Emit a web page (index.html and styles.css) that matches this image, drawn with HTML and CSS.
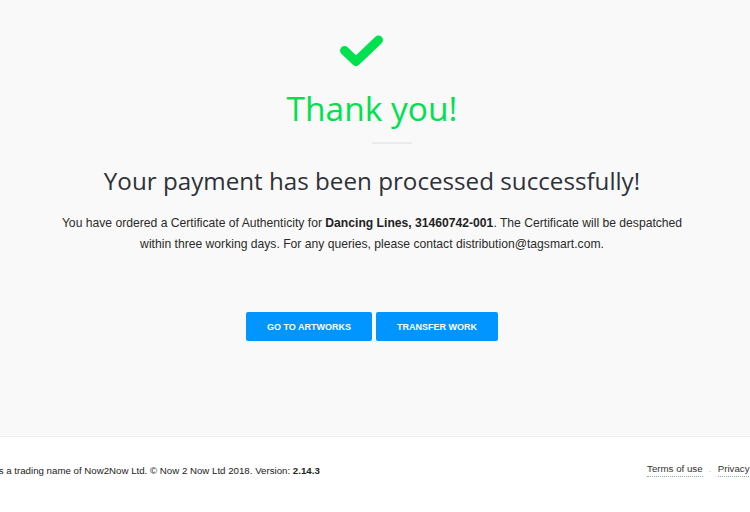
FILE: index.html
```html
<!DOCTYPE html>
<html>
<head>
<meta charset="utf-8">
<link rel="stylesheet" href="styles.css">
</head>
<body>
<main class="main">
  <div class="content">
    <svg class="check" width="44" height="34" viewBox="0 0 44 34">
      <polyline points="5.5,15.5 17,26.5 39.5,5" fill="none" stroke="#00e14f" stroke-width="9" stroke-linecap="round" stroke-linejoin="round"/>
    </svg>
    <h1 class="thanks">Thank you!</h1>
    <div class="divider"></div>
    <h2 class="title">Your payment has been processed successfully!</h2>
    <p class="text">You have ordered a Certificate of Authenticity for <b>Dancing Lines, 31460742-001</b>. The Certificate will be despatched within three working days. For any queries, please contact distribution@tagsmart.com.</p>
    <div class="actions">
      <a class="btn">GO TO ARTWORKS</a>
      <a class="btn btn-wide">TRANSFER WORK</a>
    </div>
  </div>
</main>
<footer class="footer">
  <div class="footer-inner">
    <span class="copy">Tagsmart is a trading name of Now2Now Ltd. © Now 2 Now Ltd 2018. Version: <b>2.14.3</b></span>
    <nav class="links">
      <a class="link">Terms of use</a>
      <span class="dot">·</span>
      <a class="link">Privacy policy</a>
    </nav>
  </div>
</footer>
</body>
</html>
```
FILE: styles.css
```css
html, body {
  margin: 0;
  padding: 0;
  overflow: hidden;
  background: #ffffff;
}
body {
  width: 750px;
  font-family: "Liberation Sans", Arial, sans-serif;
}
.main {
  background: #f9f9f9;
  height: 436px;
  border-bottom: 1px solid #efefef;
}
.content {
  display: flex;
  flex-direction: column;
  align-items: center;
  padding-top: 35px;
  padding-right: 6px;
}
.check {
  display: block;
  margin-right: 22px;
}
.thanks {
  margin: 17px 0 0;
  font-family: "Open Sans", sans-serif;
  font-weight: 400;
  font-size: 33.5px;
  line-height: 44px;
  color: #00e14f;
}
.divider {
  width: 40px;
  height: 2px;
  background: #ececec;
  margin: 12px 0 0 40px;
}
.title {
  margin: 20px 0 0;
  font-family: "Open Sans", sans-serif;
  font-weight: 400;
  font-size: 24.2px;
  line-height: 34px;
  color: #2e3238;
}
.text {
  margin: 15px 0 0;
  width: 640px;
  text-align: center;
  font-size: 12.15px;
  line-height: 21px;
  color: #2a2a2a;
}
.text b {
  color: #222;
}
.actions {
  display: flex;
  gap: 4px;
  margin-top: 57px;
}
.btn {
  display: flex;
  align-items: center;
  justify-content: center;
  width: 126px;
  height: 29px;
  background: #0095ff;
  color: #fff;
  font-size: 9px;
  font-weight: 700;
  border-radius: 2px;
}
.btn-wide {
  width: 122px;
}
.footer {
  height: 75px;
  background: #fff;
}
.footer-inner {
  display: flex;
  justify-content: space-between;
  align-items: center;
  margin-left: -46px;
  margin-right: -27px;
  padding-top: 26px;
  font-size: 9.7px;
  color: #222;
}
.links {
  display: flex;
  align-items: center;
  gap: 6px;
}
.link {
  border-bottom: 1px dotted #8aa;
  padding-bottom: 2px;
  color: #333;
}
.dot {
  color: #bbb;
}
```
